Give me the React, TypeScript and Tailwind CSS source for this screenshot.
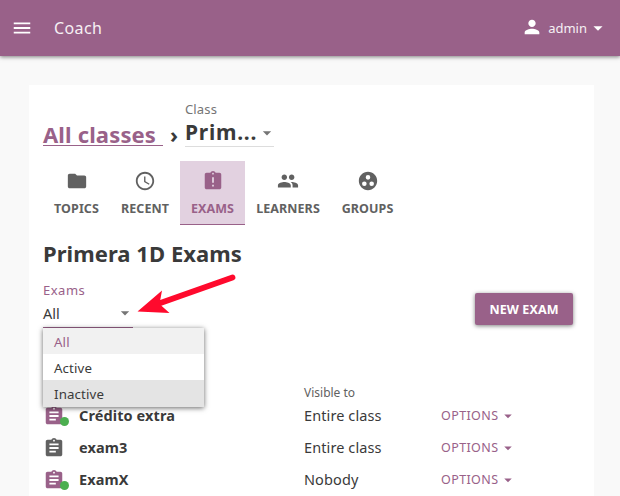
import type { ReactNode } from "react";
import {
  MdMenu,
  MdPerson,
  MdArrowDropDown,
  MdFolder,
  MdAccessTime,
  MdAssignmentLate,
  MdPeople,
  MdGroupWork,
  MdAssignment,
} from "react-icons/md";

function Tab({ icon, label, width, active }: { icon: ReactNode; label: string; width: string; active?: boolean }) {
  return (
    <div
      className={`${width} flex h-16 shrink-0 flex-col items-center border-b pt-[9px] text-[12.5px] font-bold tracking-[0.08px] ${
        active ? "border-[#996189] bg-[#e2d1e0] text-[#996189]" : "border-transparent text-[#616161]"
      }`}
    >
      {icon}
      <span className="mt-[9px] leading-4 whitespace-nowrap">{label}</span>
    </div>
  );
}

function ExamRow({ name, visible, active }: { name: string; visible: string; active?: boolean }) {
  return (
    <div className="flex h-8 items-center text-[14.5px] leading-5 tracking-[0.1px] text-[#3a3a3a]">
      <div className={`relative w-9 shrink-0 ${active ? "text-[#996189]" : "text-[#616161]"}`}>
        <MdAssignment size={22} />
        {active && <span className="absolute top-[12px] left-[17px] size-[9px] rounded-full bg-[#4caf50]" />}
      </div>
      <div className="w-[225px] shrink-0 pb-[3px] font-bold">{name}</div>
      <div className="w-[137px] shrink-0 pb-[3px]">{visible}</div>
      <div className="flex items-center text-[12.5px] tracking-[0.4px] text-[#996189]">
        <span>OPTIONS</span>
        <MdArrowDropDown size={18} className="ml-px" />
      </div>
    </div>
  );
}

export default function App() {
  return (
    <div className="flex h-[496px] w-[620px] flex-col overflow-hidden bg-[#f9f9f9] font-['Noto_Sans',sans-serif] text-[#3a3a3a]">
      <header className="flex h-14 shrink-0 items-center bg-[#996189] text-white shadow-[0_1px_4px_rgba(0,0,0,0.5)]">
        <MdMenu size={22} className="ml-[11px]" />
        <span className="ml-[21px] text-[16px] tracking-[0.4px] text-[#f6f0f4]">Coach</span>
        <div className="mr-[11px] ml-auto flex items-center">
          <MdPerson size={22} className="-mt-[2px]" />
          <span className="mt-px ml-[5px] text-[13px] text-[#f6f0f4]">admin</span>
          <MdArrowDropDown size={22} />
        </div>
      </header>

      <main className="mt-[29px] ml-[29px] h-[411px] w-[565px] bg-white pl-[14px]">
        <div className="flex h-[76px]">
          <div className="mt-[39px] h-[22px] w-[120px] border-b border-[#996189] text-[22px] leading-[20px] font-bold tracking-[0.15px] whitespace-nowrap text-[#996189]">
            All classes
          </div>
          <div className="mt-[39px] ml-[7px] w-[15px] text-[22px] leading-[20px] font-bold">›</div>
          <div className="h-[62px] w-[89px] border-b border-[#dddddd] pt-[16px]">
            <div className="text-[13px] leading-4 tracking-[0.15px] text-[#757575]">Class</div>
            <div className="flex h-[31px] items-center text-[21px] font-bold">
              <span className="tracking-[0.75px] whitespace-nowrap">Prim...</span>
              <MdArrowDropDown size={20} className="ml-auto -mr-[3px] shrink-0 text-[#757575]" />
            </div>
          </div>
        </div>

        <nav className="flex">
          <Tab width="w-[67px]" label="TOPICS" icon={<MdFolder size={22} />} />
          <Tab width="w-[70px]" label="RECENT" icon={<MdAccessTime size={22} />} />
          <Tab width="w-[65px]" label="EXAMS" icon={<MdAssignmentLate size={22} />} active />
          <Tab width="w-[86px]" label="LEARNERS" icon={<MdPeople size={22} />} />
          <Tab width="w-[73px]" label="GROUPS" icon={<MdGroupWork size={22} />} />
        </nav>

        <h1 className="mt-[14px] h-[29px] text-[22px] leading-[28px] font-bold tracking-[0.05px]">Primera 1D Exams</h1>

        <div className="relative flex h-[116px] pt-[14px]">
          <div className="h-[46px] w-[90px] border-b border-[#996189]">
            <div className="text-[13px] leading-4 tracking-[0.5px] text-[#996189]">Exams</div>
            <div className="flex h-[30px] items-center text-[14.5px]">
              <span className="pt-[2px]">All</span>
              <MdArrowDropDown size={20} className="ml-auto -mr-[2px] text-[#757575]" />
            </div>
          </div>
          <button className="mt-[11px] ml-[342px] h-8 w-[98px] rounded-[2px] bg-[#996189] pt-[2px] text-[12.5px] font-bold tracking-[0.1px] text-white shadow-[0_1px_4px_rgba(0,0,0,0.5)]">
            NEW EXAM
          </button>
          <ul className="absolute top-[60px] left-0 z-10 w-[161px] bg-white text-[13.3px] leading-[26px] tracking-[0.12px] shadow-[0_1px_5px_rgba(0,0,0,0.6)]">
            <li className="h-[26px] bg-[#f1f1f1] pt-px pl-[11px] text-[#996189]">All</li>
            <li className="h-[26px] pt-px pl-[11px]">Active</li>
            <li className="h-[27px] bg-[#e4e4e4] pt-px pl-[11px]">Inactive</li>
          </ul>
          <svg className="pointer-events-none absolute top-[4px] left-[92px]" width="106" height="44" viewBox="135 272 106 44">
            <path d="M232.500 277.500L159 303.500" stroke="#ff0a2d" strokeWidth="5.800" strokeLinecap="round" />
            <path d="M137.500 311.500L162 290.500L159.500 304L169.500 313Z" fill="#ff0a2d" />
          </svg>
        </div>

        <div className="h-[16px] pt-px pl-[261px] text-[12px] leading-4 text-[#616161]">Visible to</div>
        <ExamRow name="Crédito extra" visible="Entire class" active />
        <ExamRow name="exam3" visible="Entire class" />
        <ExamRow name="ExamX" visible="Nobody" active />
      </main>
    </div>
  );
}
